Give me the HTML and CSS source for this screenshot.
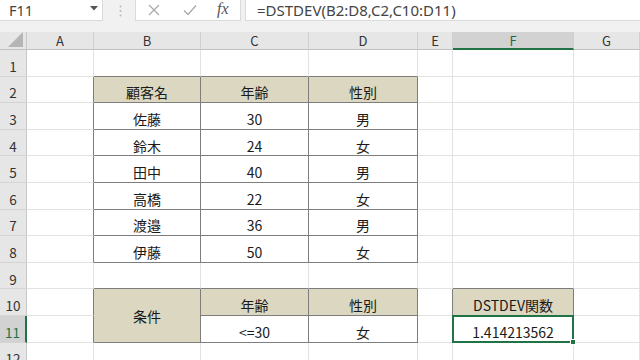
FILE: index.html
```html
<!DOCTYPE html>
<html lang="ja">
<head>
<meta charset="utf-8">
<link rel="stylesheet" href="styles.css">
</head>
<body>
<div class="bar">
  <div class="namebox"><span>F11</span><svg class="caret" width="8" height="5" viewBox="0 0 8 5"><path d="M0 0h8L4 4.5z" fill="#555"/></svg></div>
  <div class="grip"><svg width="3" height="12" viewBox="0 0 3 12"><circle cx="1.5" cy="1.5" r="1" fill="#b8b8b8"/><circle cx="1.5" cy="6" r="1" fill="#b8b8b8"/><circle cx="1.5" cy="10.5" r="1" fill="#b8b8b8"/></svg></div>
  <div class="btns">
    <svg width="12" height="12" viewBox="0 0 12 12"><path d="M1 1l10 10M11 1L1 11" stroke="#a8a8a8" stroke-width="1.2" fill="none"/></svg>
    <svg width="14" height="12" viewBox="0 0 14 12"><path d="M1 6.5l4 4L13 1.5" stroke="#a8a8a8" stroke-width="1.3" fill="none"/></svg>
    <span class="fx">fx</span>
  </div>
  <div class="formula">=DSTDEV(B2:D8,C2,C10:D11)</div>
</div>
<div class="sheet">
  <!-- header row -->
  <div class="corner"><svg width="15" height="15" viewBox="0 0 15 15"><path d="M15 0V15H0z" fill="#b5b5b5"/></svg></div>
  <div class="ch">A</div><div class="ch">B</div><div class="ch">C</div><div class="ch">D</div><div class="ch">E</div><div class="ch act">F</div><div class="ch">G</div>
  <!-- 1 -->
  <div class="rh">1</div><div class="c"></div><div class="c bb"></div><div class="c bb"></div><div class="c bb"></div><div class="c"></div><div class="c"></div><div class="c"></div>
  <!-- 2 -->
  <div class="rh">2</div><div class="c rb"></div><div class="c t h">顧客名</div><div class="c t h">年齢</div><div class="c t h">性別</div><div class="c"></div><div class="c"></div><div class="c"></div>
  <!-- 3 -->
  <div class="rh">3</div><div class="c rb"></div><div class="c t">佐藤</div><div class="c t">30</div><div class="c t">男</div><div class="c"></div><div class="c"></div><div class="c"></div>
  <!-- 4 -->
  <div class="rh">4</div><div class="c rb"></div><div class="c t">鈴木</div><div class="c t">24</div><div class="c t">女</div><div class="c"></div><div class="c"></div><div class="c"></div>
  <!-- 5 -->
  <div class="rh">5</div><div class="c rb"></div><div class="c t">田中</div><div class="c t">40</div><div class="c t">男</div><div class="c"></div><div class="c"></div><div class="c"></div>
  <!-- 6 -->
  <div class="rh">6</div><div class="c rb"></div><div class="c t">高橋</div><div class="c t">22</div><div class="c t">女</div><div class="c"></div><div class="c"></div><div class="c"></div>
  <!-- 7 -->
  <div class="rh">7</div><div class="c rb"></div><div class="c t">渡邉</div><div class="c t">36</div><div class="c t">男</div><div class="c"></div><div class="c"></div><div class="c"></div>
  <!-- 8 -->
  <div class="rh">8</div><div class="c rb"></div><div class="c t">伊藤</div><div class="c t">50</div><div class="c t">女</div><div class="c"></div><div class="c"></div><div class="c"></div>
  <!-- 9 -->
  <div class="rh">9</div><div class="c"></div><div class="c bb"></div><div class="c bb"></div><div class="c bb"></div><div class="c"></div><div class="c bb"></div><div class="c"></div>
  <!-- 10 -->
  <div class="rh">10</div><div class="c rb"></div><div class="c t h merged">条件</div><div class="c t h">年齢</div><div class="c t h">性別</div><div class="c rb"></div><div class="c t h">DSTDEV関数</div><div class="c"></div>
  <!-- 11 -->
  <div class="rh act">11</div><div class="c rb"></div><div class="c t">&lt;=30</div><div class="c t">女</div><div class="c rb"></div><div class="c t sel">1.414213562</div><div class="c"></div>
  <!-- 12 -->
  <div class="rh">12</div><div class="c"></div><div class="c"></div><div class="c"></div><div class="c"></div><div class="c"></div><div class="c"></div><div class="c"></div>
</div>
</body>
</html>
```
FILE: styles.css
```css
html, body {
  margin: 0;
  padding: 0;
  width: 640px;
  height: 360px;
  overflow: hidden;
  background: #ffffff;
  font-family: "Noto Sans CJK JP", "Noto Sans", sans-serif;
}

.bar {
  height: 32px;
  background: #f1f1f1;
  display: flex;
  align-items: flex-start;
  box-sizing: border-box;
}

.namebox {
  width: 103px;
  height: 21px;
  background: #fff;
  border-bottom: 1px solid #dadada;
  border-right: 1px solid #dadada;
  box-sizing: border-box;
  display: flex;
  align-items: center;
  justify-content: space-between;
  padding: 0 4px 0 9px;
  font-family: "Noto Sans", sans-serif;
  font-size: 14.5px;
  color: #444;
}

.namebox .caret {
  margin-top: -4px;
}

.grip {
  width: 32px;
  height: 21px;
  display: flex;
  align-items: center;
  justify-content: center;
  padding-left: 2px;
  box-sizing: border-box;
}

.btns {
  width: 106px;
  height: 21px;
  background: #fff;
  border: 1px solid #dadada;
  border-top: none;
  box-sizing: border-box;
  display: flex;
  align-items: center;
  padding-left: 12px;
  gap: 23px;
}

.fx {
  font-family: "Liberation Serif", serif;
  font-style: italic;
  font-size: 16px;
  color: #555;
  margin-left: -3px;
  margin-top: -2px;
}

.formula {
  flex: 1;
  margin-left: 4px;
  height: 21px;
  background: #fff;
  border-left: 1px solid #dadada;
  border-bottom: 1px solid #dadada;
  box-sizing: border-box;
  padding-left: 11px;
  font-family: "Noto Sans", sans-serif;
  font-size: 15px;
  line-height: 20px;
  color: #444;
}

.sheet {
  display: grid;
  grid-template-columns: 27px 67px 107px 108px 109px 35px 121px 66px;
  grid-template-rows: 18px repeat(12, 26.6px);
}

.sheet > div {
  box-sizing: border-box;
}

.corner {
  background: #e6e6e6;
  border-right: 1px solid #c8c8c8;
  border-bottom: 1px solid #c0c0c0;
  display: flex;
  align-items: flex-end;
  justify-content: flex-end;
  padding: 0 3px 2px 0;
}

.corner svg {
  display: block;
}

.ch {
  background: #e6e6e6;
  border-right: 1px solid #d0d0d0;
  border-bottom: 1px solid #c0c0c0;
  display: flex;
  align-items: center;
  justify-content: center;
  font-size: 13px;
  color: #333;
}

.ch.act {
  background: #d2d2d2;
  border-bottom: 2px solid #217346;
  color: #1e6b41;
}

.rh {
  background: #e6e6e6;
  border-right: 1px solid #c8c8c8;
  border-bottom: 1px solid #d4d4d4;
  display: flex;
  align-items: center;
  justify-content: center;
  padding-top: 6px;
  font-size: 13.5px;
  color: #333;
}

.rh.act {
  background: #d2d2d2;
  border-right: 2px solid #217346;
  color: #217346;
}

.c {
  border-right: 1px solid #e2e2e2;
  border-bottom: 1px solid #e2e2e2;
  display: flex;
  align-items: center;
  justify-content: center;
  padding-top: 6px;
  font-size: 14px;
  color: #1a1a1a;
}

.c.t {
  border-right-color: #7d7d7d;
  border-bottom-color: #7d7d7d;
}

.c.rb {
  border-right-color: #7d7d7d;
}

.c.bb {
  border-bottom-color: #7d7d7d;
}

.c.h {
  background: #dbd7c0;
}

.c.merged {
  grid-row: span 2;
  padding-top: 2px;
}

.c.sel {
  position: relative;
}

.c.sel::after {
  content: "";
  position: absolute;
  top: -1px;
  left: -1px;
  right: -1px;
  bottom: -1px;
  border: 2px solid #217346;
}

.c.sel::before {
  content: "";
  position: absolute;
  right: -3px;
  bottom: -3px;
  width: 6px;
  height: 6px;
  background: #217346;
  border: 1px solid #fff;
  box-sizing: border-box;
  z-index: 1;
}
```
